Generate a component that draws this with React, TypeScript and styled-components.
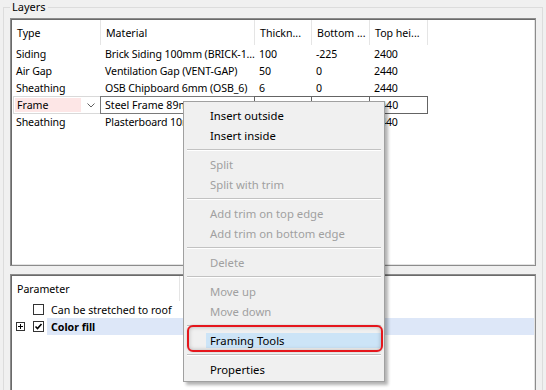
import React from 'react';
import styled, { createGlobalStyle } from 'styled-components';

const GlobalStyle = createGlobalStyle`
  html, body {
    margin: 0;
    padding: 0;
    background: #f0f0f0;
  }
  body {
    font-family: "Noto Sans", "Open Sans", sans-serif;
    font-size: 10.6px;
    color: #000;
  }
`;

const Page = styled.div`
  position: relative;
  width: 546px;
  height: 390px;
  overflow: hidden;
  background: #f0f0f0;
`;

const GroupBox = styled.div`
  position: relative;
  margin: 7px 0 0 3px;
  width: 540px;
  height: 400px;
  box-sizing: border-box;
  border: 1px solid #dcdcdc;
  border-bottom: none;
  padding: 10px 6px 0 6px;
  display: flex;
  flex-direction: column;
  gap: 8px;
`;

const Legend = styled.span`
  position: absolute;
  left: 6px;
  top: -9px;
  padding: 0 2px;
  background: #f0f0f0;
  line-height: 16px;
  font-size: 11px;
`;

const Panel = styled.div<{ $height: number }>`
  height: ${p => p.$height}px;
  flex: none;
  box-sizing: border-box;
  background: #fff;
  border: 1px solid #8c8c8c;
  box-shadow: inset 1px 1px 0 #6a6a6a, inset -1px -1px 0 #e3e3e3;
  padding: 1px;
  overflow: hidden;
`;

const columns = '89px 154px 57px 58px 58px 1fr';

const HeaderRow = styled.div<{ $cols: string }>`
  display: grid;
  grid-template-columns: ${p => p.$cols};
  height: 25px;
`;

const HeaderCell = styled.div<{ $last?: boolean }>`
  display: flex;
  align-items: center;
  padding-left: 5px;
  border-right: ${p => (p.$last ? 'none' : '1px solid #e5e5e5')};
  white-space: nowrap;
  overflow: hidden;
`;

const Row = styled.div`
  display: grid;
  grid-template-columns: ${columns};
  height: 17px;
`;

const Cell = styled.div`
  display: flex;
  align-items: center;
  padding-left: 4px;
  white-space: nowrap;
  overflow: hidden;
  letter-spacing: -0.12px;
`;

const ComboCell = styled.div`
  display: flex;
  align-items: center;
  margin: 0 0 0 1px;
  border: 1px solid #d9d9d9;
  padding: 1px;
  gap: 2px;
`;

const ComboText = styled.div`
  flex: 1;
  height: 100%;
  background: #fde6e6;
  display: flex;
  align-items: center;
  padding-left: 2px;
`;

const ComboArrow = styled.div`
  width: 16px;
  display: flex;
  align-items: center;
  justify-content: center;
`;

const EditCell = styled.div<{ $dark?: boolean }>`
  display: flex;
  align-items: center;
  padding-left: 4px;
  border: 1px solid ${p => (p.$dark ? '#646464' : '#7a7a7a')};
  margin-left: -1px;
  white-space: nowrap;
  overflow: hidden;
`;

const ParamRow = styled.div`
  display: flex;
  align-items: center;
  height: 17px;
  padding-left: 4px;
`;

const Expander = styled.div`
  width: 9px;
  height: 9px;
  flex: none;
  display: flex;
  align-items: center;
  justify-content: center;
`;

const CheckBox = styled.div`
  width: 11px;
  height: 11px;
  box-sizing: border-box;
  border: 1px solid #333;
  margin-left: 8px;
  flex: none;
  background: #fff;
  display: flex;
  align-items: center;
  justify-content: center;
`;

const ParamLabel = styled.div<{ $selected?: boolean; $bold?: boolean }>`
  flex: 1;
  height: 100%;
  margin-left: 3px;
  padding-left: 4px;
  display: flex;
  align-items: center;
  font-weight: ${p => (p.$bold ? 700 : 400)};
  background: ${p => (p.$selected ? '#dde7f8' : 'transparent')};
`;

const Menu = styled.div`
  position: absolute;
  left: 183px;
  top: 101px;
  width: 202px;
  box-sizing: border-box;
  background: #f0f0f0;
  border: 1px solid #a0a0a0;
  box-shadow: 3px 3px 3px rgba(0, 0, 0, 0.3);
  padding: 3px 0 2px;
  font-size: 11.3px;
`;

const MenuItem = styled.div<{ $disabled?: boolean }>`
  height: 20px;
  display: flex;
  align-items: center;
  padding: 0 2px 0 22px;
  color: ${p => (p.$disabled ? '#a0a0a0' : '#000')};
`;

const MenuLabel = styled.div<{ $active?: boolean }>`
  flex: 1;
  height: 15px;
  display: flex;
  align-items: center;
  padding-left: 4px;
  background: ${p => (p.$active ? '#cce4f7' : 'transparent')};
`;

const Separator = styled.div`
  height: 9px;
  display: flex;
  align-items: center;
  padding: 0 3px;
  &::after {
    content: '';
    flex: 1;
    height: 1px;
    background: #c2c2c2;
    box-shadow: 0 1px 0 #fff;
  }
`;

const Callout = styled.div`
  position: absolute;
  left: 3px;
  top: 223px;
  width: 196px;
  height: 27px;
  box-sizing: border-box;
  border: 2px solid #e5161c;
  border-radius: 6px;
  box-shadow: inset 0 0 4px rgba(0, 0, 0, 0.25), 0 0 2px rgba(0, 0, 0, 0.2);
`;

const layers = [
  ['Siding', 'Brick Siding 100mm (BRICK-1...', '100', '-225', '2400'],
  ['Air Gap', 'Ventilation Gap (VENT-GAP)', '50', '0', '2440'],
  ['Sheathing', 'OSB Chipboard 6mm (OSB_6)', '6', '0', '2440'],
];

type Entry = { label: string; disabled?: boolean; active?: boolean } | 'sep';

const menu: Entry[] = [
  { label: 'Insert outside' },
  { label: 'Insert inside' },
  'sep',
  { label: 'Split', disabled: true },
  { label: 'Split with trim', disabled: true },
  'sep',
  { label: 'Add trim on top edge', disabled: true },
  { label: 'Add trim on bottom edge', disabled: true },
  'sep',
  { label: 'Delete', disabled: true },
  'sep',
  { label: 'Move up', disabled: true },
  { label: 'Move down', disabled: true },
  'sep',
  { label: 'Framing Tools', active: true },
  'sep',
  { label: 'Properties' },
];

function LayerRow({ data }: { data: string[] }) {
  return (
    <Row>
      {data.map((v, i) => <Cell key={i}>{v}</Cell>)}
    </Row>
  );
}

export default function App() {
  return <>
    <GlobalStyle />
    <Page>
      <GroupBox>
        <Legend>Layers</Legend>
        <Panel $height={248}>
          <HeaderRow $cols={columns}>
            <HeaderCell>Type</HeaderCell>
            <HeaderCell>Material</HeaderCell>
            <HeaderCell>Thickn...</HeaderCell>
            <HeaderCell>Bottom ...</HeaderCell>
            <HeaderCell>Top hei...</HeaderCell>
            <HeaderCell $last />
          </HeaderRow>
          {layers.map((l, i) => <LayerRow key={i} data={l} />)}
          <Row>
            <ComboCell>
              <ComboText>Frame</ComboText>
              <ComboArrow>
                <svg width="8" height="5" viewBox="0 0 8 5">
                  <path d="M0.5 0.5 L4 4 L7.5 0.5" fill="none" stroke="#606060" strokeWidth="1" />
                </svg>
              </ComboArrow>
            </ComboCell>
            <EditCell>Steel Frame 89mm (SFRAM...</EditCell>
            <EditCell $dark>89</EditCell>
            <EditCell $dark>0</EditCell>
            <EditCell $dark>2440</EditCell>
          </Row>
          <LayerRow data={['Sheathing', 'Plasterboard 10mm (PLB_10)', '10', '0', '2440']} />
        </Panel>
        <Panel $height={140}>
          <HeaderRow $cols="168px 1fr">
            <HeaderCell>Parameter</HeaderCell>
            <HeaderCell $last />
          </HeaderRow>
          <ParamRow>
            <Expander />
            <CheckBox />
            <ParamLabel>Can be stretched to roof</ParamLabel>
          </ParamRow>
          <ParamRow>
            <Expander>
              <svg width="9" height="9" viewBox="0 0 9 9">
                <rect x="0.5" y="0.5" width="8" height="8" fill="#fff" stroke="#333" />
                <path d="M2 4.5 H7 M4.5 2 V7" stroke="#000" />
              </svg>
            </Expander>
            <CheckBox>
              <svg width="9" height="9" viewBox="0 0 9 9">
                <path d="M1.5 4.5 L3.5 6.5 L7.5 2" fill="none" stroke="#000" strokeWidth="1.6" />
              </svg>
            </CheckBox>
            <ParamLabel $selected $bold>Color fill</ParamLabel>
          </ParamRow>
        </Panel>
      </GroupBox>
      <Menu>
        {menu.map((m, i) =>
          m === 'sep' ? <Separator key={i} /> : (
            <MenuItem key={i} $disabled={m.disabled}>
              <MenuLabel $active={m.active}>{m.label}</MenuLabel>
            </MenuItem>
          ))}
        <Callout />
      </Menu>
    </Page>
  </>;
}
